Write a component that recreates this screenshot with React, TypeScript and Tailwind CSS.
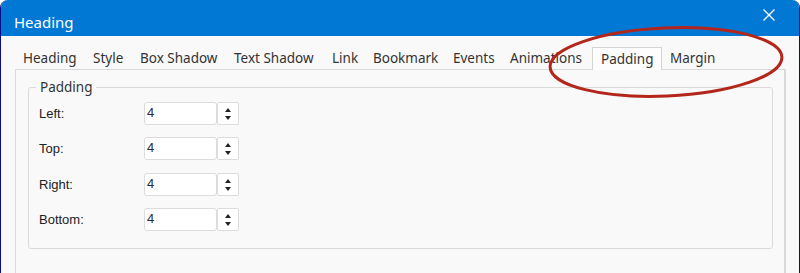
import React from 'react';

const tabs = [
  { label: 'Heading', w: 'w-[70px]' },
  { label: 'Style', w: 'w-[47px]' },
  { label: 'Box Shadow', w: 'w-[94px]' },
  { label: 'Text Shadow', w: 'w-[98px]' },
  { label: 'Link', w: 'w-[41px]' },
  { label: 'Bookmark', w: 'w-[80px]' },
  { label: 'Events', w: 'w-[57px]' },
  { label: 'Animations', w: 'w-[90px]' },
  { label: 'Padding', w: 'w-[70px]', active: true },
  { label: 'Margin', w: 'w-[62px]' },
];

const fields = [
  { label: 'Left:', mt: 'mt-0' },
  { label: 'Top:', mt: 'mt-[12px]' },
  { label: 'Right:', mt: 'mt-[13px]' },
  { label: 'Bottom:', mt: 'mt-[12px]' },
];

function SpinField({ label, mt }: { label: string; mt: string }) {
  return (
    <div className={`flex items-center h-[23px] ${mt}`}>
      <span className="w-[105px] text-[13px] text-[#222] font-['Liberation_Sans',Arial,sans-serif]">
        {label}
      </span>
      <div className="w-[73px] h-[23px] bg-white border border-[#dcdcdc] rounded-[3px] pl-[2px] text-[13px] leading-[20px] text-[#2a2a3a] font-['Liberation_Sans',Arial,sans-serif]">
        4
      </div>
      <div className="w-[22px] h-[23px] bg-white border border-[#dcdcdc] rounded-[2px] flex flex-col items-center justify-center gap-[4px]">
        <svg width="6" height="4" viewBox="0 0 6 4">
          <path d="M0 4 L3 0 L6 4 Z" fill="#222" />
        </svg>
        <svg width="6" height="4" viewBox="0 0 6 4">
          <path d="M0 0 L6 0 L3 4 Z" fill="#222" />
        </svg>
      </div>
    </div>
  );
}

export default function App() {
  return (
    <div className="relative w-[800px] h-[273px] overflow-hidden bg-[#f9f9f9] rounded-t-[8px] border-x border-[#0b0b86]">
      {/* Title bar */}
      <div className="h-[36px] bg-[#0078d4] flex items-center justify-between pl-[13px] pr-[24px]">
        <span className="text-white text-[15px] font-['Noto_Sans',sans-serif] mt-[8px]">Heading</span>
        <svg width="12" height="12" viewBox="0 0 12 12" className="-mt-[6px]">
          <path d="M0.5 0.5 L11.5 11.5 M11.5 0.5 L0.5 11.5" stroke="white" strokeWidth="1.4" />
        </svg>
      </div>

      {/* Tab strip */}
      <div className="pl-[14px] pt-[11px] font-['Noto_Sans',sans-serif] text-[13.5px] text-[#333]">
        <div className="flex items-end h-[22px]">
          {tabs.map((t) =>
            t.active ? (
              <div
                key={t.label}
                className={`${t.w} h-[23px] pl-[8px] leading-[22px] bg-[#fdfdfd] border border-b-0 border-[#d4d4d4] relative z-10 -mb-[1px]`}
              >
                {t.label}
              </div>
            ) : (
              <div key={t.label} className={`${t.w} h-[22px] pl-[8px] leading-[22px]`}>
                {t.label}
              </div>
            )
          )}
        </div>

        {/* Tab panel */}
        <div className="w-[771px] h-[220px] border-t border-l border-r-2 border-[#d9d9d9] pt-[9px] pl-[12px] pr-[11px]">
          <fieldset className="border border-[#dadada] rounded-[3px] h-[170px] pl-[7px]">
            <legend className="px-[4px] text-[13.5px] leading-[16px] text-[#333] font-['Noto_Sans',sans-serif]">
              Padding
            </legend>
            <div className="pt-[7px] pl-[3px]">
              {fields.map((f) => (
                <SpinField key={f.label} label={f.label} mt={f.mt} />
              ))}
            </div>
          </fieldset>
        </div>
      </div>

      {/* Red annotation ellipse */}
      <svg className="absolute left-0 top-0 pointer-events-none" width="800" height="273">
        <ellipse
          cx="665"
          cy="62"
          rx="116"
          ry="34"
          transform="rotate(-2.5 665 62)"
          fill="none"
          stroke="#b3261b"
          strokeWidth="3"
        />
      </svg>
    </div>
  );
}
